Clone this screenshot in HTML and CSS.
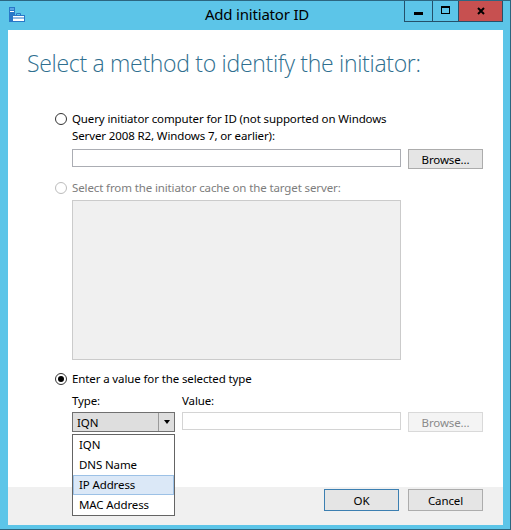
FILE: index.html
```html
<!DOCTYPE html>
<html lang="en">
<head>
    <meta charset="UTF-8">
    <title>Add initiator ID</title>
    <link rel="stylesheet" href="styles.css">
</head>
<body>
    <div class="window">
        <header class="titlebar">
            <div class="app-icon">
                <svg width="17" height="17" viewBox="0 0 17 17">
                    <rect x="0" y="1" width="6" height="15" fill="#2878c8"/>
                    <rect x="1" y="5" width="4" height="1" fill="#fff"/>
                    <rect x="1" y="2" width="4" height="2" fill="#5aa6e6"/>
                    <rect x="3.5" y="9.5" width="12" height="6" fill="#fff" stroke="#2878c8"/>
                    <path d="M7.5 9.5 V7.5 H11.5 V9.5" fill="none" stroke="#2878c8"/>
                    <rect x="3.5" y="11.5" width="12" height="1" fill="#2878c8"/>
                </svg>
            </div>
            <span class="title">Add initiator ID</span>
            <div class="caption-buttons">
                <div class="cap-btn min"><span class="min-glyph"></span></div>
                <div class="cap-btn max"><span class="max-glyph"></span></div>
                <div class="cap-btn close">
                    <svg width="8" height="8" viewBox="0 0 8 8">
                        <path d="M1 1 L7 7 M7 1 L1 7" stroke="#000" stroke-width="2"/>
                    </svg>
                </div>
            </div>
        </header>
        <div class="client">
            <main class="content">
                <h1>Select a method to identify the initiator:</h1>
                <div class="options">
                    <section class="option first">
                        <div class="radio-row">
                            <span class="radio"></span>
                            <span>Query initiator computer for ID (not supported on Windows<br>Server 2008 R2, Windows 7, or earlier):</span>
                        </div>
                        <div class="field-row">
                            <div class="textbox wide"></div>
                            <div class="button">Browse...</div>
                        </div>
                    </section>
                    <section class="option">
                        <div class="radio-row disabled">
                            <span class="radio"></span>
                            <span>Select from the initiator cache on the target server:</span>
                        </div>
                        <div class="listbox"></div>
                    </section>
                    <section class="option">
                        <div class="radio-row">
                            <span class="radio checked"></span>
                            <span>Enter a value for the selected type</span>
                        </div>
                        <div class="labels-row">
                            <span>Type:</span>
                            <span>Value:</span>
                        </div>
                        <div class="type-row">
                            <div class="combo">
                                <span class="combo-text">IQN</span>
                                <span class="combo-arrow"></span>
                                <ul class="dropdown">
                                    <li>IQN</li>
                                    <li>DNS Name</li>
                                    <li class="hot">IP Address</li>
                                    <li>MAC Address</li>
                                </ul>
                            </div>
                            <div class="textbox light"></div>
                            <div class="button disabled">Browse...</div>
                        </div>
                    </section>
                </div>
            </main>
            <footer class="footer">
                <div class="button default">OK</div>
                <div class="button">Cancel</div>
            </footer>
        </div>
    </div>
</body>
</html>
```
FILE: styles.css
```css
* {
    margin: 0;
    padding: 0;
    box-sizing: border-box;
}
body {
    width: 511px;
    height: 530px;
    overflow: hidden;
    font-family: "Noto Sans", sans-serif;
    font-size: 11.5px;
    letter-spacing: -0.12px;
    color: #000;
}
.window {
    width: 511px;
    height: 530px;
    background-color: #5cc5e8;
    border: 1px solid #2c6680;
    border-left: none;
    display: flex;
    flex-direction: column;
}
.titlebar {
    height: 29px;
    display: grid;
    grid-template-columns: 1fr auto 1fr;
    align-items: start;
}
.titlebar .app-icon {
    padding: 5px 0 0 9px;
    height: 22px;
}
.titlebar .title {
    padding: 3px 0 0 4px;
    line-height: 20px;
    font-size: 15px;
    letter-spacing: -0.2px;
}
.caption-buttons {
    justify-self: end;
    display: flex;
    margin-right: 7px;
}
.cap-btn {
    height: 21px;
    border-left: 1px solid #24506a;
    border-bottom: 1px solid #24506a;
    display: flex;
    align-items: center;
    justify-content: center;
}
.cap-btn.min {
    width: 28px;
}
.cap-btn.max {
    width: 26px;
}
.cap-btn.close {
    width: 45px;
    border-right: 1px solid #24506a;
    background-color: #c75050;
}
.min-glyph {
    width: 9px;
    height: 3px;
    margin-top: 5px;
    background-color: #000;
}
.max-glyph {
    width: 9px;
    height: 8px;
    border: 1px solid #000;
    border-top-width: 2px;
    margin-top: -2px;
}
.client {
    flex: 1;
    margin: 0 7px 4px 8px;
    display: flex;
    flex-direction: column;
}
.content {
    flex: 1;
    background-color: #fff;
    padding: 17px 0 0 19px;
}
.content h1 {
    font-family: "Open Sans", sans-serif;
    font-weight: 300;
    font-size: 23px;
    letter-spacing: -0.3px;
    line-height: 32px;
    color: #2f6f8f;
}
.options {
    margin-left: 28px;
}
.option {
    margin-top: 10px;
}
.option.first {
    margin-top: 31px;
}
.radio-row {
    display: flex;
    gap: 5px;
    line-height: 17px;
}
.radio-row.disabled {
    color: #7d7d7d;
}
.radio {
    width: 12px;
    height: 12px;
    margin-top: 3px;
    border: 1px solid #333;
    border-radius: 50%;
    background-color: #fff;
    flex-shrink: 0;
    display: flex;
    align-items: center;
    justify-content: center;
}
.radio-row.disabled .radio {
    border-color: #bcbcbc;
}
.radio.checked::after {
    content: "";
    width: 6px;
    height: 6px;
    border-radius: 50%;
    background-color: #000;
}
.field-row {
    margin: 5px 0 0 17px;
    display: flex;
    gap: 7px;
    align-items: flex-start;
}
.textbox {
    height: 18px;
    border: 1px solid #abadb3;
    background-color: #fff;
}
.textbox.wide {
    width: 329px;
}
.textbox.light {
    border-color: #d4d4d4;
}
.button {
    width: 75px;
    height: 20px;
    border: 1px solid #acacac;
    background-color: #e5e5e5;
    display: flex;
    align-items: center;
    justify-content: center;
    line-height: 17px;
}
.button.disabled {
    border-color: #d9d9d9;
    background-color: #f4f4f4;
    color: #8a8a8a;
}
.button.default {
    border-color: #3c7fb1;
}
.listbox {
    margin: 4px 0 0 17px;
    width: 329px;
    height: 160px;
    border: 1px solid #cbcbcb;
    background-color: #f0f0f0;
}
.labels-row {
    margin: 5px 0 0 17px;
    display: grid;
    grid-template-columns: 103px 219px;
    gap: 7px;
    line-height: 17px;
}
.type-row {
    margin: 3px 0 0 17px;
    display: grid;
    grid-template-columns: 103px 219px 75px;
    gap: 7px;
    align-items: start;
}
.combo {
    position: relative;
    height: 20px;
    border: 1px solid #707070;
    background-color: #dedede;
    display: flex;
}
.combo-text {
    flex: 1;
    padding: 1px 0 0 4px;
    line-height: 18px;
}
.combo-arrow {
    width: 16px;
    border-left: 1px solid #9a9a9a;
    display: flex;
    align-items: center;
    justify-content: center;
}
.combo-arrow::after {
    content: "";
    border-left: 3px solid transparent;
    border-right: 3px solid transparent;
    border-top: 4px solid #000;
}
.dropdown {
    position: absolute;
    top: 21px;
    left: -1px;
    width: 103px;
    border: 1px solid #646464;
    background-color: #fff;
    list-style: none;
    z-index: 5;
}
.dropdown li {
    height: 20px;
    line-height: 18px;
    padding-left: 5px;
    border: 1px solid transparent;
}
.dropdown li.hot {
    background-color: #dbe8f7;
    border-color: #9cc1e6;
}
.footer {
    height: 38px;
    background-color: #f0f0f0;
    display: flex;
    justify-content: flex-end;
    align-items: flex-start;
    gap: 9px;
    padding: 2px 20px 0 0;
}
.footer .button {
    height: 22px;
}
```
